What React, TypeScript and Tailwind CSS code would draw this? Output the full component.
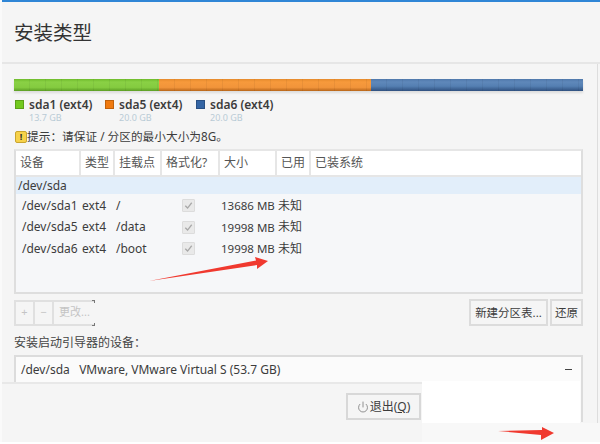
import React from 'react';
import { Power } from 'lucide-react';

const cjk = "font-['Noto_Sans','Noto_Sans_CJK_SC',sans-serif]";
const cols = 'grid grid-cols-[65px_34px_47px_58px_57px_34px_1fr]';
const ticks =
  'bg-[repeating-linear-gradient(90deg,transparent_0,transparent_15px,rgba(0,0,0,0.05)_15px,rgba(0,0,0,0.05)_16px)]';

const parts = [
  { name: 'sda1', path: '/dev/sda1', mount: '/', gb: '13.7 GB', mb: '13686 MB', swatch: 'bg-[#73c91f]' },
  { name: 'sda5', path: '/dev/sda5', mount: '/data', gb: '20.0 GB', mb: '19998 MB', swatch: 'bg-[#f07a10]' },
  { name: 'sda6', path: '/dev/sda6', mount: '/boot', gb: '20.0 GB', mb: '19998 MB', swatch: 'bg-[#3465a4]' },
];

function Legend({ name, gb, swatch, width }: { name: string; gb: string; swatch: string; width: string }) {
  return (
    <div className={`flex gap-[5px] ${width}`}>
      <div className={`w-[9px] h-[9px] mt-[2px] border border-black/20 ${swatch}`} />
      <div className="flex flex-col">
        <span className="text-[12px] leading-[13px] font-semibold text-[#3c3c3c] whitespace-nowrap">{name} (ext4)</span>
        <span className="text-[9px] leading-[12px] mt-[1px] text-[#b9cbd6]">{gb}</span>
      </div>
    </div>
  );
}

function HeadCell({ children, last }: { children: React.ReactNode; last?: boolean }) {
  return (
    <div className={`h-full flex items-center pl-[4px] text-[12px] text-[#555] whitespace-nowrap ${last ? '' : 'border-r-2 border-[#e6e6e6]'}`}>
      {children}
    </div>
  );
}

function Check() {
  return (
    <div className="w-[13px] h-[13px] bg-[#e9e9e9] border border-[#dcdcdc] rounded-[1px] flex items-center justify-center">
      <svg viewBox="0 0 12 12" className="w-[11px] h-[11px]">
        <path d="M2.5 6.2 L5 8.8 L9.5 3" fill="none" stroke="#a8a8a8" strokeWidth="1.4" />
      </svg>
    </div>
  );
}

function PartRow({ p }: { p: (typeof parts)[number] }) {
  return (
    <div className={`${cols} h-[21.5px] items-center text-[12px] text-[#3c3c3c]`}>
      <span className="pl-[6px] whitespace-nowrap">{p.path}</span>
      <span className="pl-[1px]">ext4</span>
      <span className="pl-[1px]">{p.mount}</span>
      <div className="flex justify-center pr-[5px]"><Check /></div>
      <span className="pl-[1px] whitespace-nowrap text-[11.5px]">{p.mb}</span>
      <span className="pl-[1px] whitespace-nowrap">未知</span>
      <span />
    </div>
  );
}

function SmallBtn({ children, className }: { children: React.ReactNode; className: string }) {
  return (
    <div className={`h-[26px] flex items-center justify-center border-2 border-[#e0e0e0] text-[#c4c4c4] text-[11px] ${className}`}>
      {children}
    </div>
  );
}

export default function App() {
  return (
    <div className={`relative w-[600px] h-[444px] overflow-hidden bg-[#f5f5f5] ${cjk}`}>
      <div className="h-[2px] bg-[#2f86d6]" />
      <div className="h-[62px] pl-[14px] pt-[18px] border-b-2 border-[#e6e6e6] text-[19.5px] leading-[26px] text-[#333]">
        安装类型
      </div>

      <div className="px-[14px] pr-[17px] pt-[15px]">
        {/* partition bar */}
        <div className="flex h-[12px] shadow-[0_2px_2px_rgba(120,120,120,0.2)]">
          <div className="w-[145px] bg-[linear-gradient(#6fbb2c,#8ad145_25%,#84cb40_70%,#5c9e24)]">
            <div className={`h-full ${ticks}`} />
          </div>
          <div className="w-[212px] bg-[linear-gradient(#e58a2c,#f79a3c_25%,#f1943a_70%,#b8661a)]">
            <div className={`h-full ${ticks}`} />
          </div>
          <div className="flex-1 bg-[linear-gradient(#4f78ab,#5f88ba_25%,#547fb2_60%,#2f507f)]">
            <div className={`h-full ${ticks}`} />
          </div>
        </div>

        <div className="flex mt-[7px] pl-[1px]">
          <Legend {...parts[0]} width="w-[90px]" />
          <Legend {...parts[1]} width="w-[91px]" />
          <Legend {...parts[2]} width="w-[90px]" />
        </div>

        <div className="flex items-center h-[14px] mt-[6px] text-[11.7px] text-[#3c3c3c] whitespace-nowrap">
          <div className="w-[12px] h-[12px] mt-[-1px] ml-[1px] rounded-[2px] bg-[#f7d24a] border border-[#c9a530] flex items-center justify-center text-[9px] font-bold leading-none text-[#333]">
            !
          </div>
          <span>提示：请保证 / 分区的最小大小为8G。</span>
        </div>

        {/* table */}
        <div className="mt-[5px] h-[145px] border-2 border-[#dedede] border-t-[#e6e6e6] bg-[#f6f7f9]">
          <div className={`${cols} h-[26px] items-center bg-white border-b-2 border-[#e6e6e6]`}>
            <HeadCell>设备</HeadCell>
            <HeadCell>类型</HeadCell>
            <HeadCell>挂载点</HeadCell>
            <HeadCell>格式化?</HeadCell>
            <HeadCell>大小</HeadCell>
            <HeadCell>已用</HeadCell>
            <HeadCell last>已装系统</HeadCell>
          </div>
          <div className="h-[17px] flex items-center pl-[2px] bg-[#e2eefa] text-[12px] text-[#3c3c3c]">/dev/sda</div>
          <div className="pt-[1px]">
            {parts.map((p) => (
              <PartRow key={p.name} p={p} />
            ))}
          </div>
        </div>

        {/* toolbar */}
        <div className="flex items-center justify-between mt-[5px]">
          <div className="flex">
            <SmallBtn className="w-[21px]">+</SmallBtn>
            <SmallBtn className="w-[19px] border-l-0">−</SmallBtn>
            <SmallBtn className="relative w-[41px] border-l-0 border-r-0 text-[10.5px]">
              更改...
              <span className="absolute right-0 top-[-2px] w-[3px] h-[3px] border-t border-r border-[#777]" />
              <span className="absolute right-0 bottom-[-2px] w-[3px] h-[3px] border-b border-r border-[#777]" />
            </SmallBtn>
          </div>
          <div className="flex gap-[2px] text-[#3c3c3c] text-[11.5px]">
            <div className="w-[79px] h-[27px] flex items-center justify-center border-2 border-[#dcdcdc] whitespace-nowrap">新建分区表...</div>
            <div className="w-[33px] h-[27px] flex items-center justify-center border-2 border-[#dcdcdc]">还原</div>
          </div>
        </div>

        <div className="mt-[9px] h-[16px] leading-[16px] text-[12px] text-[#444] whitespace-nowrap">安装启动引导器的设备：</div>

        {/* device combo */}
        <div className="mt-[4px] h-[67px] border-2 border-b-0 border-[#dcdcdc] bg-[#fbfbfb] flex justify-between pt-[4px] pl-[5px] pr-[9px] text-[12px] text-[#3c3c3c]">
          <span className="whitespace-pre">/dev/sda{'   '}VMware, VMware Virtual S (53.7 GB)</span>
          <span className="w-[7px] h-[1px] bg-[#444] mt-[8px]" />
        </div>
      </div>

      {/* pasted-over bottom of the screenshot */}
      <div className="absolute left-0 top-[382px] w-[422px] h-[62px] bg-[#f5f5f5] border-t-2 border-[#e8e8e8]">
        <div className="absolute left-[346px] top-[9px] w-[75px] h-[27px] flex items-center justify-center gap-[1px] border-2 border-[#d8d8d8] text-[12px] text-[#3c3c3c]">
          <Power className="w-[12px] h-[12px] text-[#777]" strokeWidth={1.6} />
          <span>退出(<span className="underline">Q</span>)</span>
        </div>
      </div>
      <div className="absolute left-[422px] top-[381px] w-[158px] h-[42px] bg-white" />
      <div className="absolute left-[422px] top-[423px] w-[178px] h-[21px] bg-[#f8f8f8]" />
      <div className="absolute left-0 top-0 w-[2px] h-[444px] bg-[#fafafa]" />
      <div className="absolute left-[597px] top-[64px] w-[1px] h-[359px] bg-[#dddddd]" />
      <div className="absolute left-0 bottom-0 w-[600px] h-[2px] bg-[#ffffff]" />

      {/* red annotation arrows */}
      <svg className="absolute left-0 top-0 pointer-events-none" width="600" height="444" viewBox="0 0 600 444">
        <path d="M149 281 L256 260.5 L255 257 L268 261 L257 269 L257 265 Z" fill="#f0392f" />
        <path d="M498 431 L542 430 L542 427 L554 433 L541 440 L541 435 Z" fill="#f0392f" />
      </svg>
    </div>
  );
}
